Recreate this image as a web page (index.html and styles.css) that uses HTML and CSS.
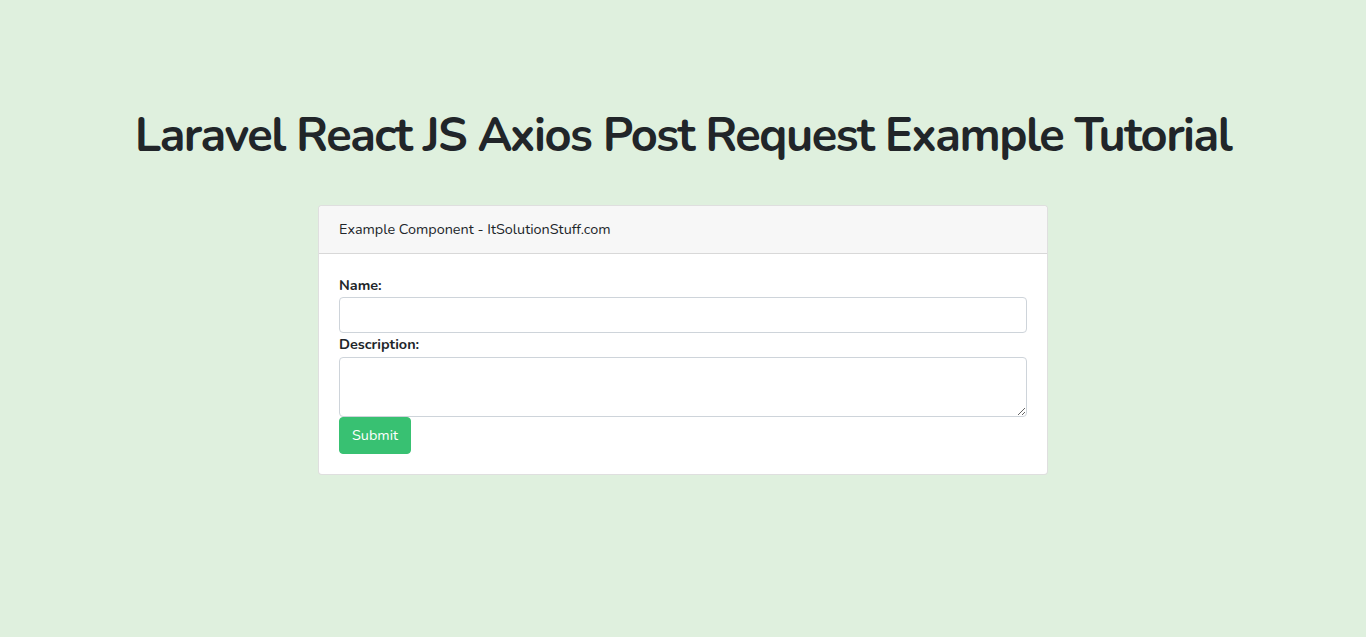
FILE: index.html
```html
<!DOCTYPE html>
<html lang="en">
<head>
    <meta charset="UTF-8">
    <meta name="viewport" content="width=device-width, initial-scale=1.0">
    <title>Laravel React JS Axios Post Request Example Tutorial</title>
    <link rel="stylesheet" href="styles.css">
</head>
<body>
    <div class="container">
        <h1>Laravel React JS Axios Post Request Example Tutorial</h1>

        <div class="card">
            <div class="card-header">Example Component - ItSolutionStuff.com</div>
            <div class="card-body">
                <form>
                    <strong>Name:</strong>
                    <input type="text" class="form-control">
                    <strong>Description:</strong>
                    <textarea class="form-control"></textarea>
                    <button type="button" class="btn-success">Submit</button>
                </form>
            </div>
        </div>
    </div>
</body>
</html>
```

FILE: styles.css
```css
body {
    margin: 0;
    background-color: #dff0de;
    font-family: Nunito, Lato, "Noto Sans", sans-serif;
    font-size: 14.4px;
    line-height: 1.6;
    color: #212529;
}
.container {
    max-width: 1140px;
    margin: 0 auto;
    padding: 108px 15px 40px;
}
h1 {
    margin: 0 -100px 41px;
    font-size: 47px;
    font-weight: 700;
    line-height: 1.2;
    letter-spacing: -1.5px;
    text-align: center;
    white-space: nowrap;
}
.card {
    box-sizing: border-box;
    width: 730px;
    margin: 0 auto;
    background-color: #fff;
    border: 1px solid rgba(0, 0, 0, 0.125);
    border-radius: 4px;
}
.card-header {
    padding: 12px 20px;
    background-color: #f7f7f7;
    border-bottom: 1px solid rgba(0, 0, 0, 0.125);
    border-radius: 4px 4px 0 0;
}
.card-body {
    padding: 20px;
}
form strong {
    display: block;
    font-weight: 700;
}
.form-control {
    display: block;
    width: 100%;
    box-sizing: border-box;
    height: 36px;
    padding: 6px 12px;
    font: inherit;
    border: 1px solid #ced4da;
    border-radius: 4px;
    background-color: #fff;
    margin: 0;
}
textarea.form-control {
    height: 60px;
    vertical-align: top;
}
.btn-success {
    display: block;
    margin-top: 0;
    padding: 6px 12px;
    font: inherit;
    color: #fff;
    background-color: #38c172;
    border: 1px solid #38c172;
    border-radius: 4px;
    cursor: pointer;
}
```
